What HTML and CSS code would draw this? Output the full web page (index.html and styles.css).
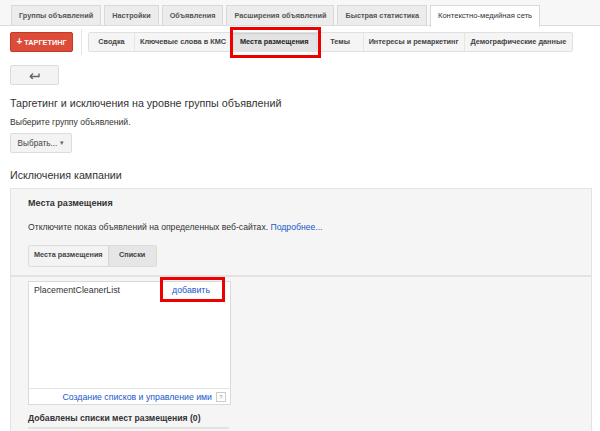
FILE: index.html
```html
<!DOCTYPE html>
<html lang="ru">
<head>
    <meta charset="UTF-8">
    <meta name="viewport" content="width=device-width, initial-scale=1.0">
    <title>Места размещения</title>
    <link rel="stylesheet" href="styles.css">
</head>
<body>
    <div class="tabs">
        <div class="tab">Группы объявлений</div>
        <div class="tab">Настройки</div>
        <div class="tab">Объявления</div>
        <div class="tab">Расширения объявлений</div>
        <div class="tab">Быстрая статистика</div>
        <div class="tab active">Контекстно-медийная сеть</div>
    </div>

    <div class="toolbar">
        <button class="btn-red"><b class="plus">+</b> ТАРГЕТИНГ</button>
        <div class="sep"></div>
        <div class="subtabs">
            <div class="subtab">Сводка</div>
            <div class="subtab">Ключевые слова в КМС</div>
            <div class="subtab active">Места размещения</div>
            <div class="subtab">Темы</div>
            <div class="subtab">Интересы и ремаркетинг</div>
            <div class="subtab">Демографические данные</div>
        </div>
    </div>

    <div class="content">
        <button class="btn back">
            <svg width="11" height="7" viewBox="0 0 11 7">
                <path d="M1 4.5 L4 1.5 M1 4.5 L4 7 M1 4.5 H10 V1.5" stroke="#666" stroke-width="1.4" fill="none"/>
            </svg>
        </button>

        <h2>Таргетинг и исключения на уровне группы объявлений</h2>
        <p class="hint">Выберите группу объявлений.</p>
        <button class="btn select">Выбрать... <span class="caret">&#9662;</span></button>

        <h2 class="campaign">Исключения кампании</h2>

        <div class="panel">
            <div class="panel-head">
                <div class="panel-title">Места размещения</div>
                <p class="desc">Отключите показ объявлений на определенных веб-сайтах. <a href="#">Подробнее...</a></p>
                <div class="toggle">
                    <div class="toggle-item">Места размещения</div>
                    <div class="toggle-item active">Списки</div>
                </div>
            </div>
            <div class="panel-body">
                <div class="list-box">
                    <div class="list-row">
                        <span>PlacementCleanerList</span>
                        <a href="#" class="add">добавить</a>
                    </div>
                    <div class="list-foot">
                        <a href="#">Создание списков и управление ими</a>
                        <span class="help">?</span>
                    </div>
                </div>
                <div class="added">Добавлены списки мест размещения (0)</div>
            </div>
        </div>
    </div>
</body>
</html>
```

FILE: styles.css
```css
body {
    margin: 0;
    font-family: "Liberation Sans", Arial, sans-serif;
    color: #333;
    background: #fff;
    overflow: hidden;
    white-space: nowrap;
}
a {
    color: #1a57c9;
    text-decoration: none;
}
.tabs {
    display: flex;
    gap: 3px;
    padding: 5px 0 0 11px;
    height: 20px;
    background: #f7f7f7;
    border-bottom: 1px solid #dcdcdc;
}
.tab {
    padding: 0 7px;
    line-height: 19px;
    font-size: 7.3px;
    font-weight: bold;
    color: #555;
    background: #ececec;
    border: 1px solid #d9d9d9;
    border-bottom: none;
}
.tab.active {
    background: #fff;
    height: 21px;
    font-weight: normal;
    font-size: 7.6px;
    color: #333;
}
.toolbar {
    display: flex;
    align-items: center;
    padding: 6px 0 0 10px;
}
.btn-red {
    flex-shrink: 0;
    height: 20px;
    width: 63px;
    padding: 0;
    border: 1px solid #c53727;
    border-radius: 2px;
    background: #dd4b39;
    color: #fff;
    font-family: inherit;
    font-size: 7.3px;
    font-weight: bold;
}
.plus {
    font-size: 10px;
    line-height: 8px;
}
.sep {
    flex-shrink: 0;
    width: 1px;
    height: 20px;
    background: #e5e5e5;
    margin: 0 6px 0 8px;
    box-shadow: 0 -3px 0 #e5e5e5, 0 3px 0 #e5e5e5;
}
.subtabs {
    display: flex;
    height: 20px;
    border: 1px solid #e0e0e0;
    border-radius: 2px;
    background: #f5f5f5;
    box-sizing: border-box;
}
.subtab {
    min-width: 35px;
    padding: 0 5px;
    text-align: center;
    line-height: 18px;
    font-size: 7.3px;
    font-weight: bold;
    color: #444;
    border-left: 1px solid #e5e5e5;
}
.subtab:first-child {
    border-left: none;
}
.subtab:last-child {
    padding: 0 6px;
}
.subtab.active {
    position: relative;
    padding: 0 8px;
    background: #e3e3e3;
    color: #222;
    box-shadow: inset 0 1px 2px rgba(0, 0, 0, 0.1);
}
.subtab.active::after {
    content: "";
    position: absolute;
    top: -6px;
    left: -2px;
    right: -4px;
    bottom: -7px;
    border: 3px solid #ee0000;
}
.content {
    padding: 13px 8px 0 10px;
}
.btn {
    display: flex;
    align-items: center;
    justify-content: center;
    height: 20px;
    padding: 0;
    border: 1px solid #dcdcdc;
    border-radius: 2px;
    background: #f3f3f3;
    font-family: inherit;
    color: #444;
}
.back {
    width: 49px;
}
h2 {
    margin: 10px 0 0;
    font-size: 10.7px;
    font-weight: normal;
    line-height: 16px;
    color: #333;
}
.hint {
    margin: 5px 0 0;
    font-size: 8.6px;
    line-height: 13px;
}
.select {
    margin-top: 4px;
    width: 62px;
    font-size: 8.2px;
    gap: 3px;
}
.caret {
    font-size: 7px;
    color: #666;
}
h2.campaign {
    margin-top: 14px;
}
.panel {
    margin-top: 5px;
    height: 260px;
    background: #f5f5f5;
    border: 1px solid #e3e3e3;
}
.panel-head {
    padding: 8px 17px 8px;
    border-bottom: 2px solid #e3e3e3;
}
.panel-title {
    font-size: 9px;
    font-weight: bold;
    line-height: 13px;
    color: #333;
}
.desc {
    margin: 11px 0 0;
    font-size: 8.65px;
    line-height: 13px;
}
.toggle {
    display: inline-flex;
    margin-top: 11px;
    height: 20px;
    border: 1px solid #dcdcdc;
    border-radius: 2px;
    background: #f3f3f3;
}
.toggle-item {
    padding: 0 5px;
    line-height: 18px;
    font-size: 7.3px;
    font-weight: bold;
    color: #444;
}
.toggle-item.active {
    width: 47px;
    padding: 0;
    text-align: center;
    background: #e6e6e6;
    border-left: 1px solid #d5d5d5;
}
.panel-body {
    padding: 4px 17px 0;
}
.list-box {
    width: 201px;
    height: 122px;
    display: flex;
    flex-direction: column;
    background: #fff;
    border: 1px solid #dadada;
}
.list-row {
    display: flex;
    align-items: flex-start;
    justify-content: space-between;
    padding: 2px 20px 0 5px;
    font-size: 8.8px;
    line-height: 13px;
    flex: 1;
}
.add {
    position: relative;
    font-size: 8.8px;
}
.add::after {
    content: "";
    position: absolute;
    top: -7px;
    left: -12px;
    right: -15px;
    bottom: -5px;
    border: 3px solid #ee0000;
}
.list-foot {
    display: flex;
    justify-content: flex-end;
    align-items: center;
    gap: 4px;
    height: 15px;
    padding-right: 4px;
    border-top: 1px solid #e5e5e5;
    font-size: 8.75px;
}
.help {
    width: 8px;
    height: 8px;
    border: 1px solid #ccc;
    font-size: 6px;
    line-height: 8px;
    text-align: center;
    color: #999;
}
.added {
    margin-top: 7px;
    width: 201px;
    padding-bottom: 2px;
    border-bottom: 2px solid #e3e3e3;
    font-size: 8.65px;
    font-weight: bold;
    line-height: 13px;
}
```
